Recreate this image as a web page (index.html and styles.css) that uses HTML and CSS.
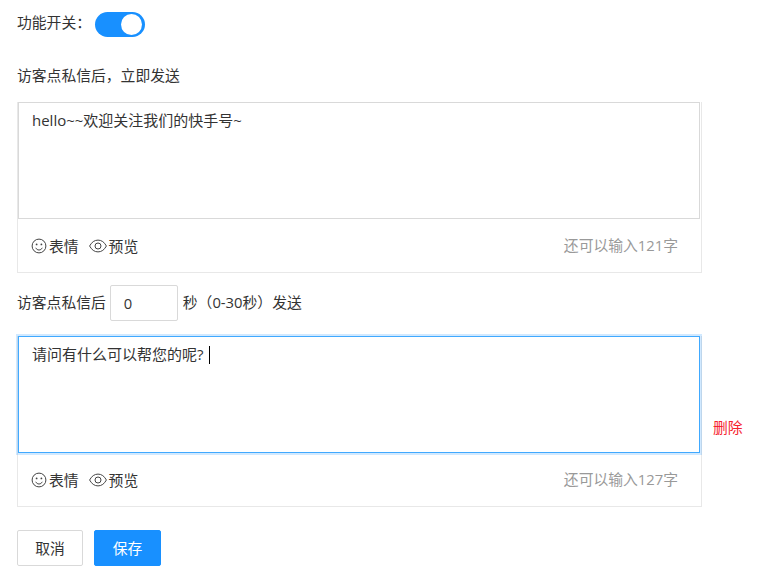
FILE: index.html
```html
<!DOCTYPE html>
<html lang="zh-CN">
<head>
<meta charset="utf-8">
<title>私信设置</title>
<link rel="stylesheet" href="styles.css">
</head>
<body>
<main class="page">
  <div class="switch-row">
    <span class="switch-label">功能开关：</span>
    <span class="switch"><span class="knob"></span></span>
  </div>
  <div class="label-row">访客点私信后，立即发送</div>
  <div class="panel-row">
    <section class="panel">
      <div class="editor">hello~~欢迎关注我们的快手号~</div>
      <div class="toolbar">
        <span class="tool">
          <svg class="icon-face" viewBox="0 0 16 16"><circle cx="8" cy="8" r="6.9"/><circle class="dot" cx="5.6" cy="6.4" r="0.9"/><circle class="dot" cx="10.4" cy="6.4" r="0.9"/><path d="M4.7 9.8c.8 1.5 2 2.2 3.3 2.2s2.500-.7 3.300-2.200"/></svg>表情
        </span>
        <span class="tool">
          <svg class="icon-eye" viewBox="0 0 18 14"><path d="M.6 7C2.700 3.100 5.500 1.100 9 1.100s6.300 2 8.400 5.900c-2.100 3.900-4.900 5.900-8.400 5.900S2.700 10.900.6 7z"/><circle cx="9" cy="7" r="3"/></svg>预览
        </span>
        <span class="count">还可以输入121字</span>
      </div>
    </section>
  </div>
  <div class="delay-row">
    <span>访客点私信后</span>
    <span class="number">0</span>
    <span>秒（0-30秒）发送</span>
  </div>
  <div class="panel-row">
    <section class="panel">
      <div class="editor editor-focus">请问有什么可以帮您的呢?<span class="caret"></span></div>
      <div class="toolbar">
        <span class="tool">
          <svg class="icon-face" viewBox="0 0 16 16"><circle cx="8" cy="8" r="6.9"/><circle class="dot" cx="5.6" cy="6.4" r="0.9"/><circle class="dot" cx="10.4" cy="6.4" r="0.9"/><path d="M4.7 9.8c.8 1.5 2 2.2 3.3 2.2s2.500-.7 3.300-2.200"/></svg>表情
        </span>
        <span class="tool">
          <svg class="icon-eye" viewBox="0 0 18 14"><path d="M.6 7C2.700 3.100 5.500 1.100 9 1.100s6.300 2 8.400 5.900c-2.100 3.900-4.900 5.900-8.400 5.900S2.700 10.900.6 7z"/><circle cx="9" cy="7" r="3"/></svg>预览
        </span>
        <span class="count">还可以输入127字</span>
      </div>
    </section>
    <a class="delete">删除</a>
  </div>
  <div class="actions">
    <button class="btn">取消</button>
    <button class="btn btn-primary">保存</button>
  </div>
</main>
</body>
</html>
```
FILE: styles.css
```css
* { box-sizing: border-box; }
html, body { margin: 0; background: #fff; }
body {
  font-family: "Open Sans", "Noto Sans CJK SC", sans-serif;
  font-size: 14.8px;
  color: #333;
  overflow: hidden;
}
.page { padding: 12px 0 0 17px; }
.switch-row { display: flex; height: 25px; }
.switch-label { width: 78px; height: 21px; line-height: 21px; }
.switch {
  width: 50px; height: 25px; border-radius: 13px; background: #1890ff;
  display: flex; justify-content: flex-end; align-items: center; padding-right: 3px;
}
.knob { width: 21px; height: 21px; border-radius: 50%; background: #fff; }
.label-row { margin-top: 28px; height: 22px; line-height: 20px; }
.panel-row { display: flex; align-items: center; margin-top: 15px; }
.panel {
  width: 685px; height: 171px;
  border: solid #e8e8e8; border-width: 0 1px 1px 1px;
}
.editor {
  width: 682px; height: 117px; padding: 6px 13px;
  border: 1px solid #d9d9d9; font-size: 15px; line-height: 23px; color: #333;
}
.editor-focus { border-color: #40a9ff; box-shadow: 0 0 0 2px rgba(24, 144, 255, .2); }
.caret { display: inline-block; width: 1px; height: 18px; background: #000; margin-left: 6px; vertical-align: -4px; }
.toolbar { display: flex; align-items: center; height: 53px; padding: 0 23px 0 13px; line-height: 20px; }
.tool { display: flex; align-items: center; margin-right: 10px; }
.icon-face { width: 16px; height: 16px; margin-right: 2px; }
.icon-eye { width: 18px; height: 14px; margin-right: 2px; }
.tool svg { fill: none; stroke: #444; stroke-width: 1; }
.tool svg .dot { fill: #444; stroke: none; }
.count { margin-left: auto; margin-top: -2px; color: #999; }
.delay-row { display: flex; align-items: center; margin-top: 12px; height: 36px; line-height: 34px; }
.delay-row > span:not(.number) { height: 36px; }
.number {
  width: 68px; height: 36px; margin: 0 5px 0 4px; padding-left: 13px;
  border: 1px solid #d9d9d9; border-radius: 2px; line-height: 34px;
}
.delete { margin: 10px 0 0 11px; color: #f5222d; }
.actions { display: flex; gap: 11px; margin-top: 23px; }
.btn {
  width: 66px; height: 36px; padding: 0 0 2px; font: inherit; color: #333;
  background: #fff; border: 1px solid #d9d9d9; border-radius: 2px;
}
.btn-primary { width: 67px; color: #fff; background: #1890ff; border-color: #1890ff; }
```
